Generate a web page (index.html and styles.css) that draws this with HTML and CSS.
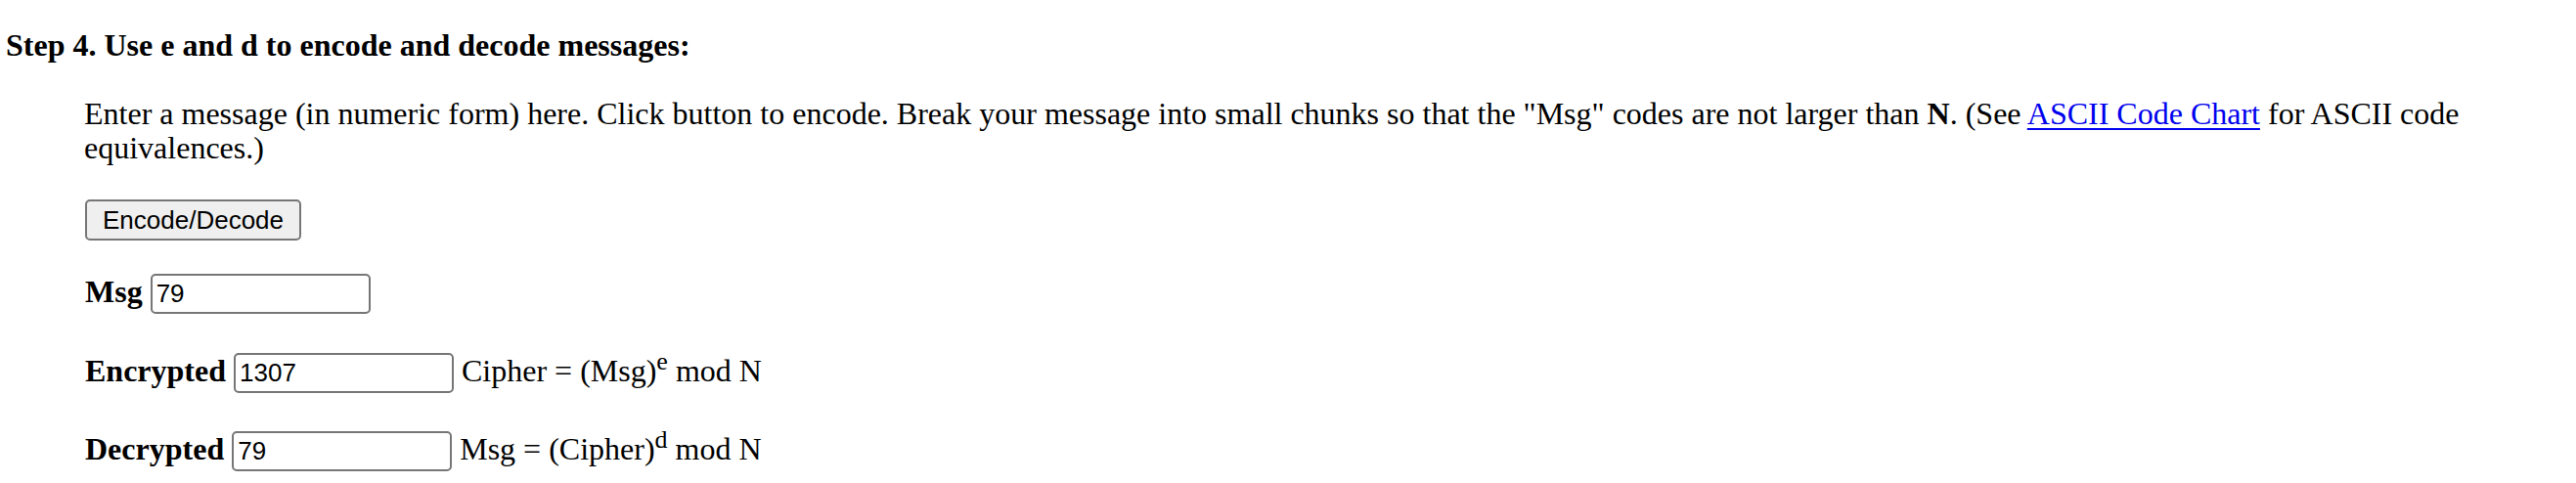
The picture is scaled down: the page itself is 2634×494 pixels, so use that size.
FILE: index.html
```html
<!DOCTYPE html>
<html>
<head>
<meta charset="utf-8">
<link rel="stylesheet" href="styles.css">
</head>
<body>
<div class="page">
  <div class="step">Step 4. Use e and d to encode and decode messages:</div>
  <div class="section">
    <p class="intro">Enter a message (in numeric form) here. Click button to encode. Break your message into small chunks so that the "Msg" codes are not larger than <b>N</b>. (See <a href="#" class="link">ASCII Code Chart</a> for ASCII code equivalences.)</p>
    <div class="btn-row"><button class="btn" type="button">Encode/Decode</button></div>
    <div class="row row-msg">
      <b class="label">Msg</b>
      <input class="field" type="text" value="79">
    </div>
    <div class="row row-enc">
      <b class="label">Encrypted</b>
      <input class="field" type="text" value="1307">
      <span class="formula">Cipher = (Msg)<sup>e</sup> mod N</span>
    </div>
    <div class="row row-dec">
      <b class="label">Decrypted</b>
      <input class="field" type="text" value="79">
      <span class="formula">Msg = (Cipher)<sup>d</sup> mod N</span>
    </div>
  </div>
</div>
</body>
</html>
```
FILE: styles.css
```css
html, body {
  margin: 0;
  padding: 0;
  background: #ffffff;
}
body {
  font-family: "Liberation Serif", "Times New Roman", serif;
  font-size: 32px;
  color: #000000;
}
.page {
  padding: 28px 0 0 6px;
}
.step {
  font-weight: bold;
  font-size: 32px;
  line-height: 36px;
}
.section {
  padding-left: 80px;
  padding-top: 35px;
}
.intro {
  margin: 0;
  line-height: 35px;
}
.link {
  color: #0000ee;
  text-decoration: underline;
  text-decoration-thickness: 2px;
  text-underline-offset: 4px;
}
.btn-row {
  display: flex;
  margin-top: 35px;
}
.btn {
  box-sizing: border-box;
  height: 42px;
  padding: 0 16px;
  margin: 0 0 0 1px;
  font-family: "Liberation Sans", Arial, sans-serif;
  font-size: 26px;
  color: #000000;
  background: #efefef;
  border: 2px solid #767676;
  border-radius: 5px;
}
.row {
  display: flex;
  align-items: baseline;
  gap: 8px;
}
.row-msg { margin-top: 34px; }
.row-enc { margin-top: 40px; }
.row-dec { margin-top: 39px; }
.label {
  font-weight: bold;
  line-height: 35px;
  padding-left: 1px;
}
.field {
  box-sizing: border-box;
  width: 225px;
  height: 41px;
  margin: 0;
  padding: 2px 4px;
  font-family: "Liberation Sans", Arial, sans-serif;
  font-size: 26px;
  color: #000000;
  background: #ffffff;
  border: 2px solid #767676;
  border-radius: 5px;
}
.formula {
  line-height: 35px;
}
.formula sup {
  font-size: 26px;
  line-height: 0;
  vertical-align: 12px;
}
```
